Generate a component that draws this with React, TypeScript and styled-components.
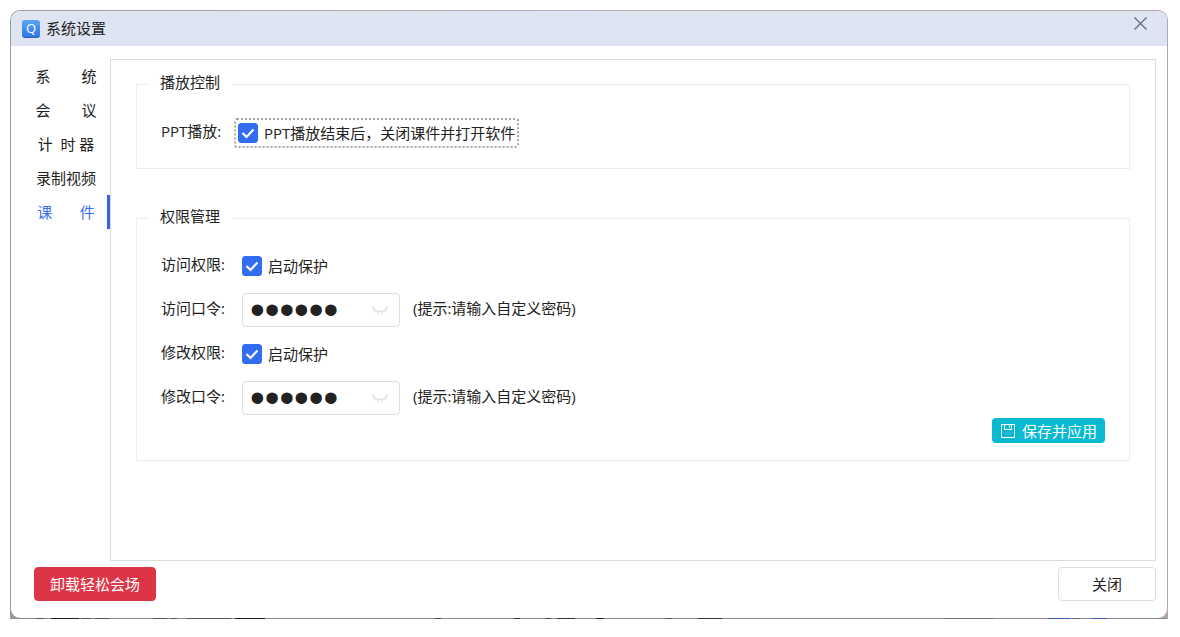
import React, { useState } from "react";
import styled, { createGlobalStyle, css } from "styled-components";

const GlobalStyle = createGlobalStyle`
  * { box-sizing: border-box; }
  body { margin: 0; background: #fff; }
  body, button, input {
    font-family: "Open Sans", "Noto Sans CJK SC", sans-serif;
    font-size: 15px;
    line-height: 20px;
    color: #222;
  }
  button { cursor: pointer; }
`;

const Page = styled.div`
  display: flex;
  min-height: 100vh;
  padding: 10px 12px 18px 10px;
`;

const Frame = styled.div`
  flex: 1;
  display: flex;
  flex-direction: column;
  min-width: 0;
  padding: 1px 1px 0;
  border-radius: 10px 10px 0 0;
  background: linear-gradient(90deg, #9c9ca0, #b5b3b9 50%, #b5a6ad);
`;

const Dialog = styled.section`
  flex: 1;
  display: flex;
  flex-direction: column;
  border-radius: 9px;
  background: #fff;
  overflow: hidden;
`;

const Backdrop = styled.svg`
  display: block;
  width: 100%;
  height: 1px;
`;

const TitleBar = styled.header`
  display: flex;
  align-items: center;
  gap: 6px;
  height: 35px;
  padding: 0 18px 0 11px;
  background: #dfe4f3;
`;

const Logo = styled.span`
  display: flex;
  align-items: center;
  justify-content: center;
  width: 18px;
  height: 18px;
  border-radius: 3px;
  border-bottom: 1px solid #2a62bd;
  background: linear-gradient(#5ba3f5, #2f78e4);
  color: #fff;
  font-size: 13px;
  line-height: 16px;
`;

const Title = styled.h1`
  flex: 1;
  margin: 0;
  padding-bottom: 2px;
  font-size: 15px;
  font-weight: 400;
`;

const CloseIconButton = styled.button`
  display: flex;
  align-self: flex-start;
  margin-top: 5px;
  padding: 0;
  border: 0;
  background: none;
`;

const Body = styled.div`
  flex: 1;
  display: flex;
  padding: 13px 11px 0 0;
`;

const Nav = styled.nav`
  display: flex;
  flex-direction: column;
  width: 99px;
  padding: 0 0 0 14px;
`;

const Tab = styled.button<{ $active: boolean }>`
  height: 34px;
  padding: 0;
  border: 0;
  border-right: 3px solid ${(p) => (p.$active ? "#3565d6" : "transparent")};
  background: none;
  color: ${(p) => (p.$active ? "#3a6cf0" : "#222")};
  white-space: pre;
`;

const Panel = styled.main`
  flex: 1;
  min-width: 0;
  padding: 12px 25px 30px;
  border: 1px solid #dcdcdc;
`;

const Group = styled.fieldset<{ $top: number; $bottom: number }>`
  margin: 0 0 37px;
  padding: ${(p) => p.$top}px 24px ${(p) => p.$bottom}px;
  border: 1px solid #ececec;
  min-width: 0;
`;

const Legend = styled.legend`
  margin-left: -13px;
  padding: 0 12px 4px;
`;

const Rows = styled.div`
  display: flex;
  flex-direction: column;
  gap: 17px;
`;

const Row = styled.div`
  display: flex;
  align-items: center;
`;

const labelStyle = css<{ $width: number }>`
  flex: none;
  width: ${(p) => p.$width}px;
  margin: -2px 0 2px;
`;
const RowLabel = styled.span`${labelStyle}`;
const FieldLabel = styled.label`${labelStyle}`;
const Hint = styled.span`
  margin: -2px 0 2px;
`;

const CheckLabel = styled.label<{ $focused?: boolean }>`
  display: flex;
  align-items: center;
  gap: 6px;
  height: ${(p) => (p.$focused ? 30 : 20)}px;
  padding: ${(p) => (p.$focused ? "0 2px" : "0")};
  border: ${(p) => (p.$focused ? "2px dotted #a9a9a9" : "0")};
  border-radius: 3px;
`;

const Checkbox = styled.input`
  appearance: none;
  width: 20px;
  height: 20px;
  margin: 0;
  border: 1px solid #326cf0;
  border-radius: 3px;
  background: #fff;
  &:checked {
    background: #326cf0
      url("data:image/svg+xml,%3Csvg xmlns='http://www.w3.org/2000/svg' viewBox='0 0 18 18'%3E%3Cpath d='M3.5 9l4 4 7-7.500' fill='none' stroke='white' stroke-width='2.200'/%3E%3C/svg%3E")
      center / 18px 18px no-repeat;
  }
`;

const PasswordBox = styled.div`
  display: flex;
  align-items: center;
  width: 158px;
  height: 34px;
  margin-right: 13px;
  padding: 0 10px 0 7px;
  border: 1px solid #dedede;
  border-radius: 4px;
`;

const PasswordInput = styled.input`
  flex: 1;
  min-width: 0;
  height: 32px;
  padding: 0;
  border: 0;
  outline: 0;
  background: none;
  font-family: "Liberation Sans", sans-serif;
  font-size: 42px;
  line-height: 32px;
`;

const EyeButton = styled.button`
  display: flex;
  padding: 0;
  border: 0;
  background: none;
`;

const SaveRow = styled.div`
  display: flex;
  justify-content: flex-end;
  margin-top: 3px;
`;

const SaveButton = styled.button`
  display: flex;
  align-items: center;
  gap: 6px;
  height: 25px;
  padding: 0 8px;
  border: 0;
  border-radius: 4px;
  background: #08b9d1;
  color: #fff;
`;

const Footer = styled.footer`
  display: flex;
  justify-content: space-between;
  padding: 6px 11px 17px 23px;
`;

const FooterButton = styled.button<{ $danger?: boolean }>`
  height: 34px;
  padding: 0 ${(p) => (p.$danger ? 15 : 33)}px 1px;
  border: 1px solid ${(p) => (p.$danger ? "#dc3545" : "#dedede")};
  border-radius: 4px;
  background: ${(p) => (p.$danger ? "#dc3545" : "#fff")};
  color: ${(p) => (p.$danger ? "#fff" : "#222")};
`;

const tabs = [
  "系        统",
  "会        议",
  "计  时 器",
  "录制视频",
  "课       件",
];

const peeks: [number, number, string][] = [
  [25, 8, "#555"], [40, 28, "#222"], [70, 10, "#555"], [84, 14, "#555"],
  [142, 14, "#555"], [160, 6, "#555"], [176, 44, "#555"], [224, 30, "#222"],
  [424, 6, "#444"], [503, 6, "#333"], [535, 5, "#444"], [546, 18, "#333"],
  [585, 8, "#222"], [655, 6, "#555"], [687, 24, "#333"], [933, 50, "#77737b"],
  [1037, 22, "#3d55b5"], [1061, 8, "#666b85"], [1081, 15, "#3d55b5"],
];

function PasswordRow({ id, label }: { id: string; label: string }) {
  const [value, setValue] = useState("123456");
  const [shown, setShown] = useState(false);
  return (
    <Row>
      <FieldLabel $width={81} htmlFor={id}>{label}</FieldLabel>
      <PasswordBox>
        <PasswordInput
          id={id}
          type={shown ? "text" : "password"}
          value={value}
          onChange={(e) => setValue(e.target.value)}
        />
        <EyeButton type="button" aria-label="显示密码" onClick={() => setShown(!shown)}>
          <svg width="18" height="12" viewBox="0 0 18 12" fill="none" stroke="#dcdcdc" strokeWidth="1.2">
            <path d="M1.500 2.500C4.500 9 13.500 9 16.500 2.500M4 6L2.500 8.500M7.500 7.500L7 10.500M10.500 7.500l.5 3M14 6l1.500 2.500" />
          </svg>
        </EyeButton>
      </PasswordBox>
      <Hint>(提示:请输入自定义密码)</Hint>
    </Row>
  );
}

function CheckRow({ label }: { label: string }) {
  return (
    <Row>
      <RowLabel $width={81}>{label}</RowLabel>
      <CheckLabel>
        <Checkbox type="checkbox" defaultChecked />
        启动保护
      </CheckLabel>
    </Row>
  );
}

export default function App() {
  const [active, setActive] = useState(4);
  return (
    <Page>
      <GlobalStyle />
      <Frame>
        <Dialog>
          <TitleBar>
            <Logo>Q</Logo>
            <Title>系统设置</Title>
            <CloseIconButton type="button" aria-label="关闭窗口">
              <svg width="17" height="15" viewBox="0 0 17 15" fill="none" stroke="#6a6e7a" strokeWidth="1.4">
                <path d="M2.500 1.500l12 12M14.500 1.500l-12 12" />
              </svg>
            </CloseIconButton>
          </TitleBar>
          <Body>
            <Nav>
              {tabs.map((tab, i) => (
                <Tab key={tab} type="button" $active={i === active} onClick={() => setActive(i)}>
                  {tab}
                </Tab>
              ))}
            </Nav>
            <Panel>
              <Group $top={22} $bottom={20}>
                <Legend>播放控制</Legend>
                <Row>
                  <RowLabel $width={73}>PPT播放:</RowLabel>
                  <CheckLabel $focused>
                    <Checkbox type="checkbox" defaultChecked />
                    PPT播放结束后，关闭课件并打开软件
                  </CheckLabel>
                </Row>
              </Group>
              <Group $top={26} $bottom={17}>
                <Legend>权限管理</Legend>
                <Rows>
                  <CheckRow label="访问权限:" />
                  <PasswordRow id="access-password" label="访问口令:" />
                  <CheckRow label="修改权限:" />
                  <PasswordRow id="edit-password" label="修改口令:" />
                </Rows>
                <SaveRow>
                  <SaveButton type="button">
                    <svg width="16" height="16" viewBox="0 0 16 16" fill="none" stroke="#fff" strokeWidth="1">
                      <path d="M1.500 1.500h13v13h-13zM4.500 1.500v5h7v-5M9.500 2.500v2" />
                    </svg>
                    保存并应用
                  </SaveButton>
                </SaveRow>
              </Group>
            </Panel>
          </Body>
          <Footer>
            <FooterButton type="button" $danger>卸载轻松会场</FooterButton>
            <FooterButton type="button">关闭</FooterButton>
          </Footer>
        </Dialog>
        <Backdrop aria-hidden="true">
          <rect width="100%" height="1" fill="#8d8a8f" />
          {peeks.map(([x, width, fill]) => (
            <rect key={x} x={x} width={width} height="1" fill={fill} />
          ))}
        </Backdrop>
      </Frame>
    </Page>
  );
}
